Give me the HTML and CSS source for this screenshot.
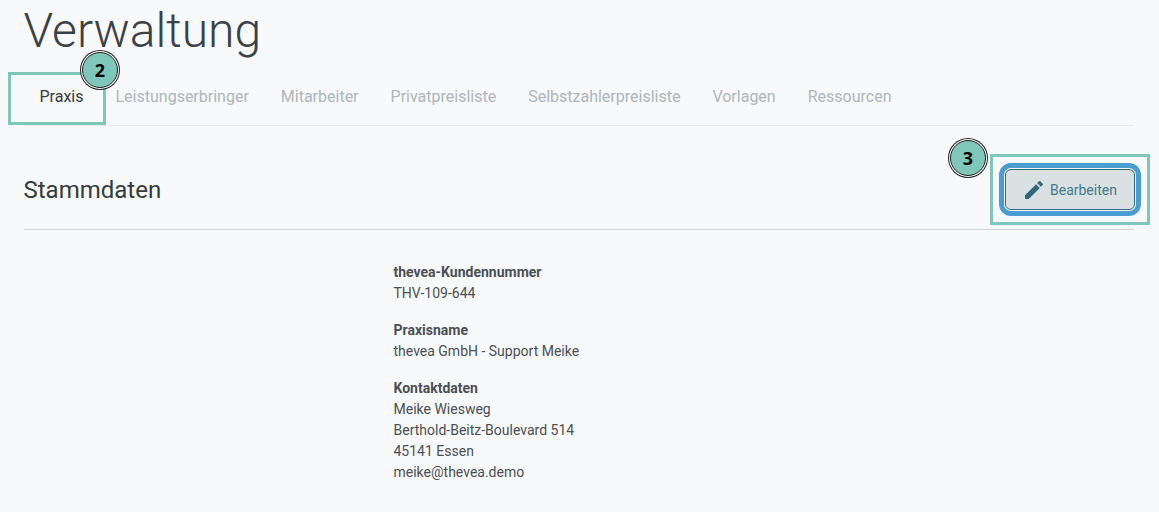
FILE: index.html
```html
<!DOCTYPE html>
<html lang="de">
<head>
  <meta charset="UTF-8">
  <title>Verwaltung</title>
  <link rel="stylesheet" href="styles.css">
</head>
<body>

  <div class="page">
    <h1>Verwaltung</h1>

    <nav class="tabs">
      <a class="tab active">Praxis
        <span class="badge badge-tab">2</span>
      </a>
      <a class="tab">Leistungserbringer</a>
      <a class="tab">Mitarbeiter</a>
      <a class="tab">Privatpreisliste</a>
      <a class="tab">Selbstzahlerpreisliste</a>
      <a class="tab">Vorlagen</a>
      <a class="tab">Ressourcen</a>
    </nav>

    <div class="section-head">
      <h2>Stammdaten</h2>
      <div class="edit-mark">
        <span class="badge badge-edit">3</span>
        <button class="edit-btn">
          <svg class="pencil" viewBox="0 0 24 24" width="24" height="24"><path d="M3 17.25V21h3.75L17.81 9.94l-3.75-3.75L3 17.25zM20.71 7.04a1 1 0 0 0 0-1.41l-2.34-2.34a1 1 0 0 0-1.41 0l-1.83 1.83 3.75 3.75 1.83-1.83z"/></svg>
          Bearbeiten
        </button>
      </div>
    </div>

    <div class="details">
      <div class="group">
        <strong>thevea-Kundennummer</strong>
        <span>THV-109-644</span>
      </div>
      <div class="group">
        <strong>Praxisname</strong>
        <span>thevea GmbH - Support Meike</span>
      </div>
      <div class="group">
        <strong>Kontaktdaten</strong>
        <span>Meike Wiesweg</span>
        <span>Berthold-Beitz-Boulevard 514</span>
        <span>45141 Essen</span>
        <span>meike@thevea.demo</span>
      </div>
    </div>
  </div>

</body>
</html>
```

FILE: styles.css
```css
:root {
  --teal: #7fc7ba;
  --text: #4a4f56;
  --muted: #adb5bd;
  --line: #e9ecef;
  --button: #2f6a7a;
}

html,
body {
  height: 100%;
}

body {
  margin: 0;
  background-color: #f8f9fb;
  color: var(--text);
  font-family: Roboto, sans-serif;
  font-size: 14px;
  line-height: 21px;
  overflow: hidden;
}

.page {
  width: 1110.5px;
  margin-left: 23.5px;
}

h1 {
  margin: 0;
  height: 66px;
  color: #3b4148;
  font-size: 48px;
  font-weight: 300;
  line-height: 62px;
}

.tabs {
  display: flex;
  height: 59px;
  border-bottom: 1px solid var(--line);
}

.tab {
  position: relative;
  padding: 0 16px;
  color: var(--muted);
  font-size: 16px;
  line-height: 61px;
}

.tab.active {
  color: #343a40;
}

/* Markierung um den Reiter */
.tab.active::before {
  content: "";
  position: absolute;
  top: 6px;
  left: -15.5px;
  width: 92px;
  height: 47px;
  border: 3px solid var(--teal);
}

.badge {
  position: absolute;
  width: 34px;
  height: 34px;
  border: 1px solid #222;
  border-radius: 50%;
  box-shadow: 0 0 0 1px #fff, 0 0 0 2px #222;
  background-color: var(--teal);
  color: #000;
  font-family: "Noto Sans", sans-serif;
  font-size: 18px;
  font-weight: 700;
  line-height: 34px;
  text-align: center;
  z-index: 2;
}

.badge-tab {
  top: -14px;
  left: 58.5px;
}

.badge-edit {
  top: -17px;
  left: -43px;
}

.section-head {
  display: flex;
  align-items: flex-end;
  justify-content: space-between;
  height: 103px;
  border-bottom: 1px solid #ced4da;
}

h2 {
  margin: 0 0 24px;
  color: #343a40;
  font-size: 24px;
  font-weight: 400;
  line-height: 30px;
}

.edit-mark {
  position: relative;
  display: flex;
  align-items: center;
  justify-content: center;
  box-sizing: border-box;
  width: 160px;
  height: 71px;
  margin-right: -16px;
  margin-bottom: 4px;
  border: 3px solid var(--teal);
}

.edit-btn {
  display: flex;
  align-items: center;
  gap: 4px;
  box-sizing: border-box;
  width: 130px;
  height: 41px;
  padding: 0 16px;
  border: 1px solid var(--button);
  border-radius: 6px;
  box-shadow: 0 0 0 1px #f8f9fb, 0 0 0 6px #4a9dd1;
  background-color: #d9e1e3;
  color: #437888;
  font-family: Roboto, sans-serif;
  font-size: 14px;
}

.pencil {
  flex: none;
  fill: var(--button);
}

.details {
  margin-left: 370px;
  padding-top: 32px;
}

.group {
  display: flex;
  flex-direction: column;
  margin-bottom: 16px;
}

.group strong {
  font-weight: 700;
}
```
